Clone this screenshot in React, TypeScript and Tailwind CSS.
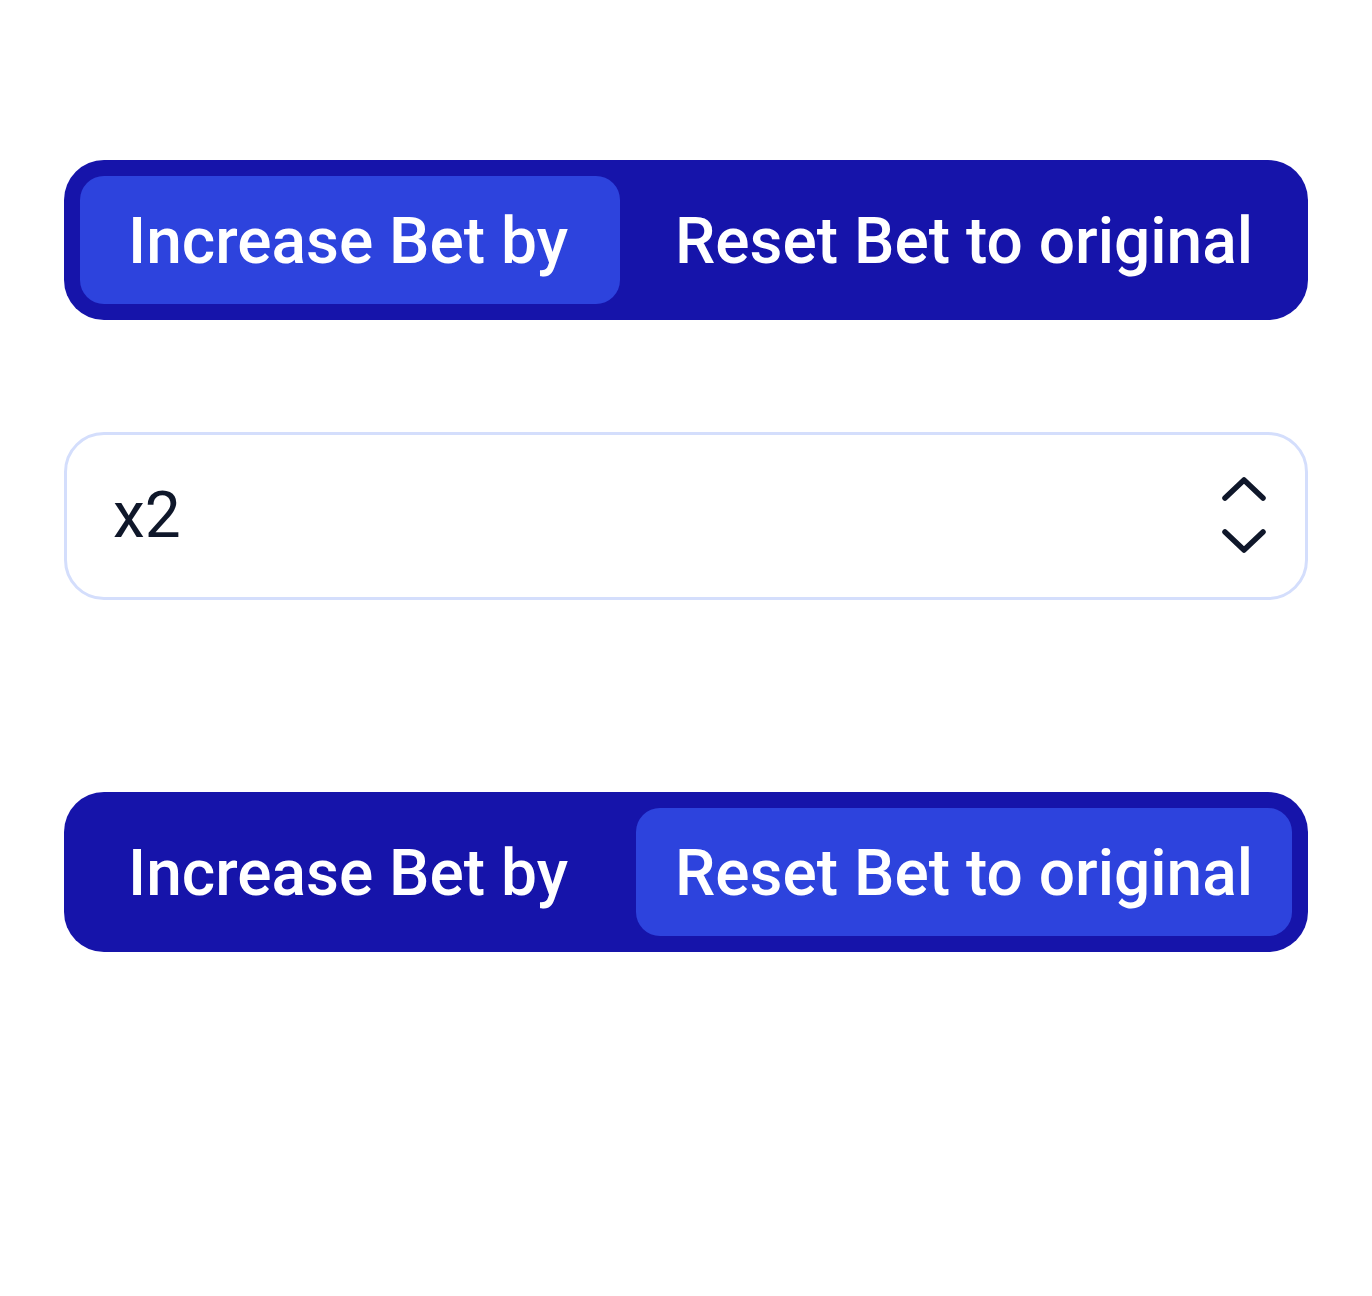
import { useState } from "react";

type Mode = "increase" | "reset";

function ModeToggle({ active }: { active: Mode }) {
    return (
        <div className="flex gap-4 p-4 w-full h-[160px] rounded-[40px] bg-[#1614aa]">
            <button
                className={`w-[540px] shrink-0 pt-1 pr-1 rounded-[24px] text-white text-[64px] font-medium leading-none ${
                    active === "increase" ? "bg-[#2d43dd]" : "bg-transparent"
                }`}
            >
                Increase Bet by
            </button>
            <button
                className={`flex-1 pt-1 rounded-[24px] text-white text-[64px] font-medium leading-none ${
                    active === "reset" ? "bg-[#2d43dd]" : "bg-transparent"
                }`}
            >
                Reset Bet to original
            </button>
        </div>
    );
}

export default function App() {
    const [value] = useState("x2");

    return (
        <div className="min-h-[1296px] bg-white px-16 pt-[160px] font-['Roboto',sans-serif]">
            {/* Top toggle */}
            <ModeToggle active="increase" />

            {/* Multiplier input */}
            <div className="mt-[112px] flex items-center justify-between h-[168px] rounded-[40px] border-[3px] border-[#d4defc] pl-[46px] pr-[34px]">
                <span className="text-[64px] leading-none text-[#0f172a]">{value}</span>
                <svg width="52" height="84" viewBox="0 0 52 84" fill="none" stroke="#0f172a" strokeWidth="5.5" strokeLinecap="round" strokeLinejoin="round">
                    <path d="M6 24 L25 6 L44 24" />
                    <path d="M6 58 L25 76 L44 58" />
                </svg>
            </div>

            {/* Bottom toggle */}
            <div className="mt-[192px]">
                <ModeToggle active="reset" />
            </div>
        </div>
    );
}
